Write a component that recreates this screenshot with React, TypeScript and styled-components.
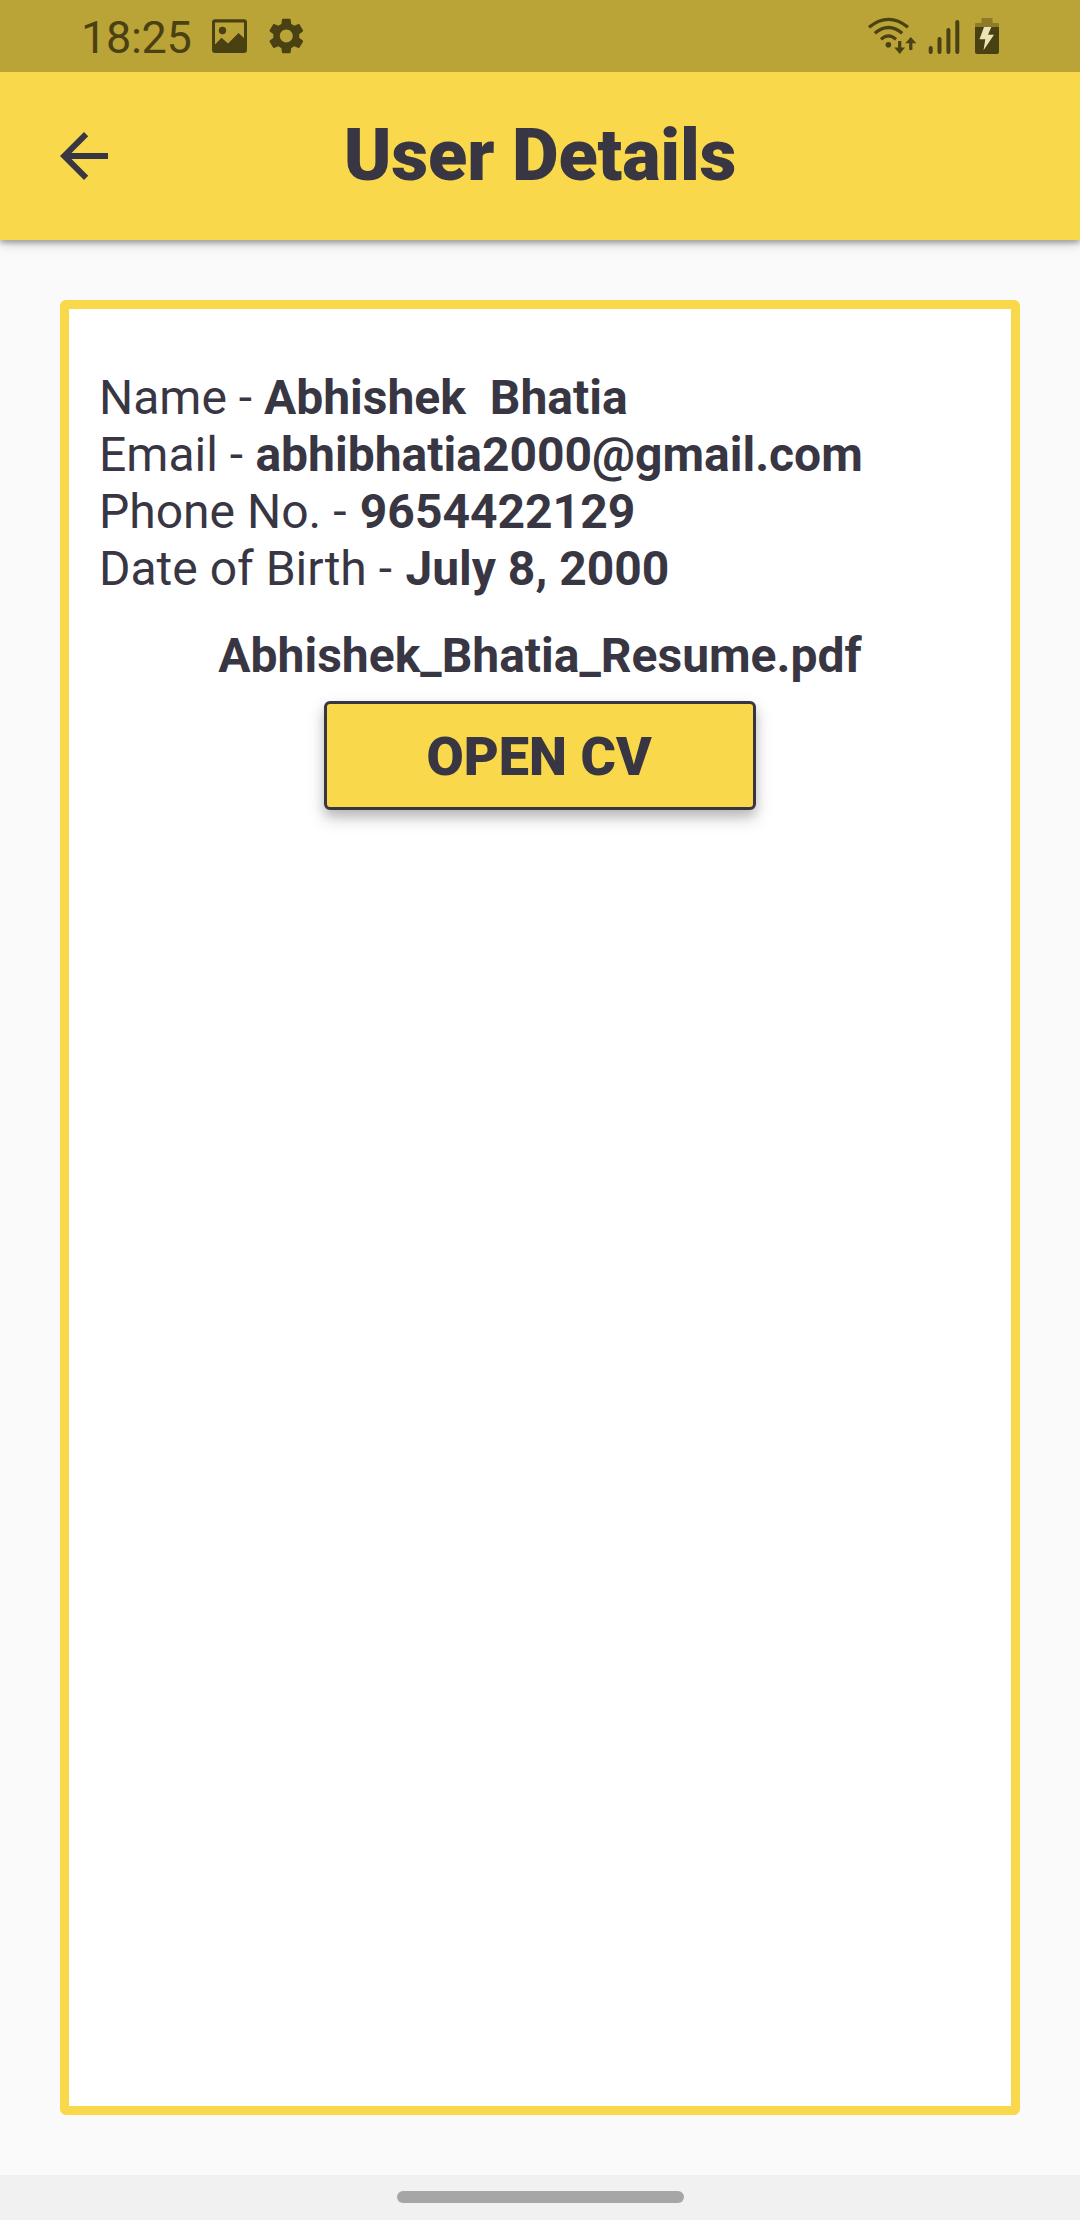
import React from 'react';
import styled, { createGlobalStyle } from 'styled-components';

const color = {
  yellow: '#f9d84b',
  status: '#baa337',
  statusInk: '#4a4113',
  statusFaint: '#8e7b27',
  ink: '#393643',
  page: '#fafafa',
  nav: '#f1f1f1',
  pill: '#a6a6a6',
};

const GlobalStyle = createGlobalStyle`
  * { box-sizing: border-box; }
  html, body { margin: 0; padding: 0; }
  body { background: ${color.page}; font-family: Roboto, "Liberation Sans", sans-serif; }
`;

const Screen = styled.div`
  display: flex;
  flex-direction: column;
  width: 1080px;
  height: 2220px;
  overflow: hidden;
  background: ${color.page};
  color: ${color.ink};
`;

const StatusBar = styled.header`
  position: relative;
  z-index: 1;
  display: flex;
  justify-content: space-between;
  height: 72px;
  flex: none;
  padding: 0 80px 0 81px;
  background: ${color.status};
  color: ${color.statusInk};
`;

const StatusGroup = styled.div`
  display: flex;
  align-items: center;
  height: 72px;
`;

const Clock = styled.span`
  font-size: 45px;
  line-height: 53px;
  letter-spacing: -0.3px;
  width: 127px;
  padding-top: 2px;
  white-space: nowrap;
`;

const AppBar = styled.div`
  display: grid;
  grid-template-columns: 168px 1fr 168px;
  align-items: center;
  height: 168px;
  flex: none;
  background: ${color.yellow};
  box-shadow: 0 3px 12px rgba(0, 0, 0, 0.2), 0 3px 5px rgba(0, 0, 0, 0.26);
`;

const BackButton = styled.button`
  display: flex;
  width: 72px;
  height: 72px;
  margin-left: 48px;
  padding: 0;
  border: 0;
  background: none;
  color: inherit;
`;

const Title = styled.h1`
  margin: 0;
  font-size: 72px;
  line-height: 84px;
  font-weight: 900;
  letter-spacing: -0.15px;
  text-align: center;
  white-space: nowrap;
`;

const Main = styled.main`
  display: flex;
  flex: 1;
  padding: 60px;
`;

const Card = styled.section`
  display: flex;
  flex-direction: column;
  flex: 1;
  padding: 60px 30px;
  border: 9px solid ${color.yellow};
  border-radius: 6px;
  background: #fff;
`;

const Field = styled.div`
  font-size: 48px;
  line-height: 57px;
  white-space: pre;
`;

const Value = styled.span<{ $gap: number }>`
  margin-left: ${(p) => p.$gap}px;
  font-weight: 700;
`;

const FileName = styled.div`
  margin-top: 30px;
  font-size: 48px;
  line-height: 57px;
  font-weight: 700;
  text-align: center;
`;

const OpenButton = styled.button`
  align-self: center;
  width: 432px;
  height: 109px;
  margin-top: 17px;
  padding: 2px 2px 0 0;
  border: 3px solid ${color.ink};
  border-radius: 6px;
  background: ${color.yellow};
  color: ${color.ink};
  font-family: inherit;
  font-size: 54px;
  line-height: 63px;
  font-weight: 900;
  box-shadow: 0 8px 18px rgba(0, 0, 0, 0.2), 0 6px 10px rgba(0, 0, 0, 0.12);
`;

const NavBar = styled.footer`
  display: flex;
  justify-content: center;
  height: 45px;
  flex: none;
  padding-top: 16px;
  background: ${color.nav};
`;

const NavPill = styled.div`
  width: 287px;
  height: 12px;
  border-radius: 6px;
  background: ${color.pill};
`;

const fields = [
  { label: 'Name', value: 'Abhishek  Bhatia', gap: 0 },
  { label: 'Email', value: 'abhibhatia2000@gmail.com', gap: 0.5 },
  { label: 'Phone No.', value: '9654422129', gap: 1.5 },
  { label: 'Date of Birth', value: 'July 8, 2000', gap: 1.5 },
];

const PhotoIcon = () => (
  <svg width="44" height="72" viewBox="208 0 44 72" fill="currentColor">
    <path
      fillRule="evenodd"
      d="M215 19.3h29a3 3 0 0 1 3 3V50a3 3 0 0 1-3 3h-29a3 3 0 0 1-3-3V22.300a3 3 0 0 1 3-3zM215 22.500V44.500L221.500 37.800L228 43.600L238.500 33L244 38V22.500z"
    />
    <circle cx="222.500" cy="30.500" r="3.700" />
  </svg>
);

const GearIcon = () => (
  <svg width="60" height="72" viewBox="252 0 60 72" fill="currentColor">
    <path
      transform="translate(264.700 14.400) scale(1.800)"
      d="M19.140 12.940c.04-.3.06-.61.06-.94 0-.32-.02-.64-.07-.94l2.030-1.580c.18-.14.23-.41.12-.61l-1.920-3.320c-.12-.22-.37-.29-.59-.22l-2.390.96c-.5-.38-1.030-.7-1.620-.94l-.36-2.540c-.04-.24-.24-.41-.48-.41h-3.840c-.24 0-.43.17-.47.41l-.36 2.540c-.59.24-1.130.57-1.620.94l-2.390-.96c-.22-.08-.47 0-.59.22L2.740 8.870c-.12.21-.08.47.12.61l2.030 1.580c-.05.3-.09.63-.09.94s.02.64.07.94l-2.030 1.580c-.18.14-.23.41-.12.61l1.920 3.320c.12.22.37.29.59.22l2.390-.96c.5.38 1.030.7 1.620.94l.36 2.540c.05.24.24.41.48.41h3.840c.24 0 .44-.17.47-.41l.36-2.540c.59-.24 1.130-.56 1.620-.94l2.390.96c.22.08.47 0 .59-.22l1.920-3.320c.12-.22.07-.47-.12-.61l-2.010-1.580zM12 15.600c-1.980 0-3.600-1.620-3.600-3.600s1.620-3.600 3.600-3.600 3.600 1.620 3.600 3.600-1.620 3.600-3.600 3.600z"
    />
  </svg>
);

const WifiIcon = () => (
  <svg width="60" height="72" viewBox="864 0 60 72" fill="none" stroke="currentColor" strokeWidth="3.200">
    <path d="M869 27.300Q888.500 11.500 908 27.300M874.800 33.300Q888.500 21.700 902.200 33.300M881 39.400Q888.500 32.400 896 39.400" />
    <circle cx="888.400" cy="44.800" r="2.800" fill="currentColor" stroke="none" />
    <path d="M899.700 41V50M910.800 50V41" />
    <path d="M894.300 47.500h10.800L899.700 54zM905.300 43.300h11L910.800 37z" fill="currentColor" stroke="none" />
  </svg>
);

const SignalIcon = () => (
  <svg width="42" height="72" viewBox="924 0 42 72" fill="none" stroke="currentColor" strokeWidth="4" strokeLinecap="round">
    <path d="M930.700 48V52M939.500 39V52M948.400 30V52M957.300 22V52" />
  </svg>
);

const BatteryIcon = () => (
  <svg width="34" height="72" viewBox="966 0 34 72">
    <path d="M981.500 18H992.500V23H998a1 1 0 0 1 1 1V27H975V24a1 1 0 0 1 1-1H981.500z" fill={color.statusFaint} />
    <path d="M975 27H999V52a2 2 0 0 1-2 2H977a2 2 0 0 1-2-2z" fill="currentColor" />
    <path d="M984 27H991.300L988 34.700H994L983.500 50.300L985.300 39.300H979.500z" fill="#ece3b9" />
  </svg>
);

const BackIcon = () => (
  <svg width="72" height="72" viewBox="0 0 24 24" fill="currentColor">
    <path d="M20 11H7.830l5.590-5.590L12 4l-8 8 8 8 1.410-1.410L7.830 13H20v-2z" />
  </svg>
);

export default function App() {
  return (
    <>
      <GlobalStyle />
      <Screen>
        <StatusBar>
          <StatusGroup>
            <Clock>18:25</Clock>
            <PhotoIcon />
            <GearIcon />
          </StatusGroup>
          <StatusGroup>
            <WifiIcon />
            <SignalIcon />
            <BatteryIcon />
          </StatusGroup>
        </StatusBar>
        <AppBar>
          <BackButton aria-label="Back">
            <BackIcon />
          </BackButton>
          <Title>User Details</Title>
        </AppBar>
        <Main>
          <Card>
            {fields.map(({ label, value, gap }) => (
              <Field key={label}>
                {label} - <Value $gap={gap}>{value}</Value>
              </Field>
            ))}
            <FileName>Abhishek_Bhatia_Resume.pdf</FileName>
            <OpenButton>OPEN CV</OpenButton>
          </Card>
        </Main>
        <NavBar>
          <NavPill />
        </NavBar>
      </Screen>
    </>
  );
}
